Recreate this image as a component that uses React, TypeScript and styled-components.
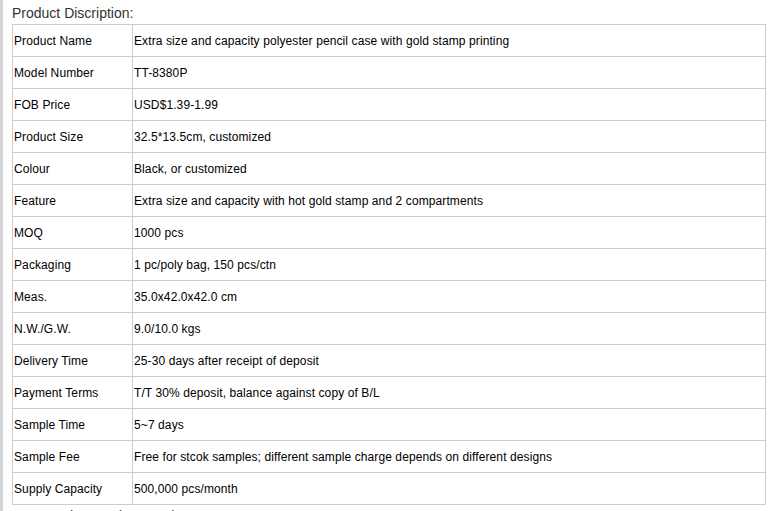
import React from "react";
import styled, { createGlobalStyle } from "styled-components";

const Global = createGlobalStyle`
  html, body { margin: 0; padding: 0; background: #fff; }
  body { font-family: Arial, "Liberation Sans", sans-serif; }
`;

const Page = styled.div`
  border-left: 3px solid #d4d4d4;
  padding-left: 9px;
  box-sizing: border-box;
  overflow: hidden;
  height: 511px;
`;

const Title = styled.div`
  font-size: 14px;
  line-height: 22px;
  padding-top: 2px;
  color: #333;
`;

const Table = styled.table`
  border-collapse: collapse;
  width: 754px;
  table-layout: fixed;
  font-size: 12px;
  letter-spacing: 0.1px;
  color: #000;
`;

const Cell = styled.td<{ $w?: number }>`
  border: 1px solid #cccccc;
  height: 32px;
  padding: 0 0 0 1px;
  vertical-align: middle;
  box-sizing: border-box;
  white-space: nowrap;
  ${(p) => (p.$w ? `width: ${p.$w}px;` : "")}
`;

const Footer = styled.div`
  font-size: 14px;
  line-height: 22px;
  color: #333;
  padding-left: 2px;
`;

const rows: [string, string][] = [
  ["Product Name", "Extra size and capacity polyester pencil case with gold stamp printing"],
  ["Model Number", "TT-8380P"],
  ["FOB Price", "USD$1.39-1.99"],
  ["Product Size", "32.5*13.5cm, customized"],
  ["Colour", "Black, or customized"],
  ["Feature", "Extra size and capacity with hot gold stamp and 2 compartments"],
  ["MOQ", "1000 pcs"],
  ["Packaging", "1 pc/poly bag, 150 pcs/ctn"],
  ["Meas.", "35.0x42.0x42.0 cm"],
  ["N.W./G.W.", "9.0/10.0 kgs"],
  ["Delivery Time", "25-30 days after receipt of deposit"],
  ["Payment Terms", "T/T 30% deposit, balance against copy of B/L"],
  ["Sample Time", "5~7 days"],
  ["Sample Fee", "Free for stcok samples; different sample charge depends on different designs"],
  ["Supply Capacity", "500,000 pcs/month"],
];

export default function App() {
  return (
    <>
      <Global />
      <Page>
        <Title>Product Discription:</Title>
        <Table>
          <tbody>
            {rows.map(([k, v]) => (
              <tr key={k}>
                <Cell $w={120}>{k}</Cell>
                <Cell>{v}</Cell>
              </tr>
            ))}
          </tbody>
        </Table>
        <Footer>Our Services and Strength:</Footer>
      </Page>
    </>
  );
}
